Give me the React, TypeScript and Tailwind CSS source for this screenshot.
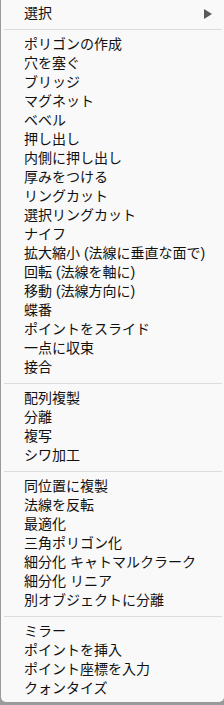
import React from "react";

const sections: string[][] = [
  [
    "ポリゴンの作成",
    "穴を塞ぐ",
    "ブリッジ",
    "マグネット",
    "ベベル",
    "押し出し",
    "内側に押し出し",
    "厚みをつける",
    "リングカット",
    "選択リングカット",
    "ナイフ",
    "拡大縮小 (法線に垂直な面で)",
    "回転 (法線を軸に)",
    "移動 (法線方向に)",
    "蝶番",
    "ポイントをスライド",
    "一点に収束",
    "接合",
  ],
  ["配列複製", "分離", "複写", "シワ加工"],
  [
    "同位置に複製",
    "法線を反転",
    "最適化",
    "三角ポリゴン化",
    "細分化 キャトマルクラーク",
    "細分化 リニア",
    "別オブジェクトに分離",
  ],
  ["ミラー", "ポイントを挿入", "ポイント座標を入力", "クォンタイズ"],
];

function Item({ label }: { label: string }) {
  return (
    <div className="h-[19px] flex items-center pl-[23px] text-[14px] leading-[19px] text-[#111] whitespace-nowrap">
      {label}
    </div>
  );
}

function Sep() {
  return (
    <div className="h-[12px] flex items-center pl-[3px] pr-[2px]">
      <div className="h-px w-full bg-[#dcdcdc]" />
    </div>
  );
}

export default function App() {
  return (
    <div
      className="w-[224px] h-[705px] bg-[#9a9a9a] overflow-hidden"
      style={{ fontFamily: '"Liberation Sans", "Noto Sans CJK JP", sans-serif' }}
    >
      <div className="ml-[1px] w-[223px] bg-[#f9f9f9] rounded-b-[5px] pt-[4px] pb-[4px]">
        <div className="h-[19px] flex items-center justify-between pl-[23px] pr-[12px] text-[14px] leading-[19px] text-[#111]">
          <span>選択</span>
          <svg width="8" height="10" viewBox="0 0 8 10">
            <path d="M0 0 L8 5 L0 10 Z" fill="#5a5a5a" />
          </svg>
        </div>
        {sections.map((sec, i) => (
          <React.Fragment key={i}>
            <Sep />
            {sec.map((l) => (
              <Item key={l} label={l} />
            ))}
          </React.Fragment>
        ))}
      </div>
    </div>
  );
}
